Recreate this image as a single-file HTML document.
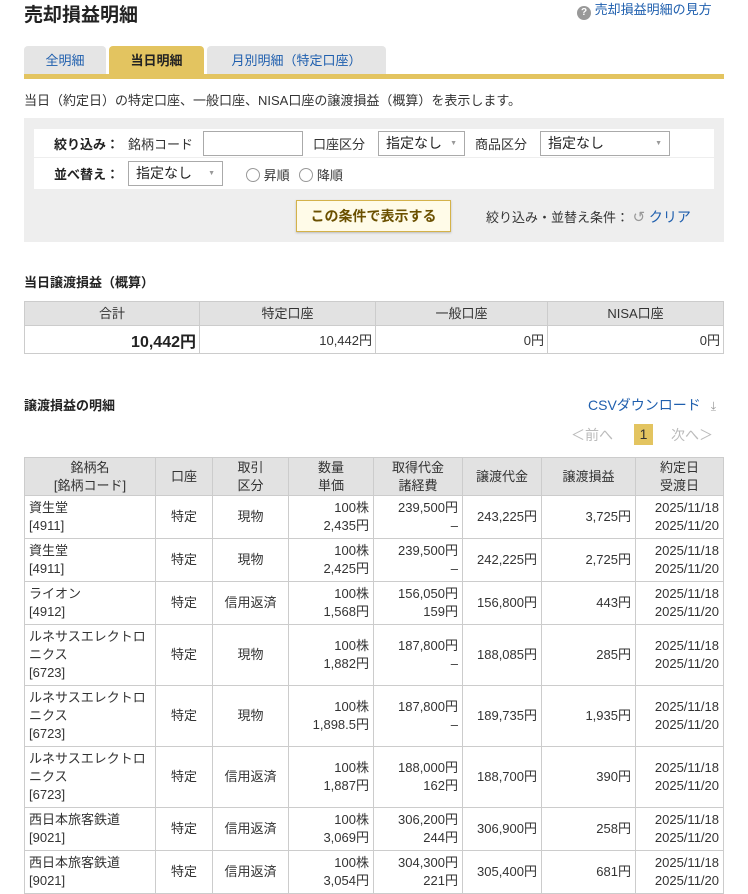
<!DOCTYPE html>
<html><head><meta charset="utf-8"><style>
*{box-sizing:border-box;margin:0;padding:0}
body{width:748px;height:894px;overflow:hidden;background:#fff;font-family:"Liberation Sans","Noto Sans CJK JP",sans-serif;font-size:13px;color:#333;position:relative}
.a{position:absolute}
.blue{color:#1f5fae}
h1{position:absolute;left:24px;top:0;font-size:19px;font-weight:bold;color:#222}
.tab{position:absolute;top:46px;height:29px;background:#e5e5e5;border-radius:4px 4px 0 0;text-align:center;line-height:29px;color:#1f5fae;font-size:13px}
.sel{background:#e3c460;color:#222;font-weight:bold}
.box{position:absolute;left:24px;top:118px;width:700px;height:124px;background:#eeeeee}
.inner{position:absolute;left:10px;top:11px;width:680px;height:60px;background:#fff}
.sel2{position:absolute;height:25px;border:1px solid #aaa;background:#fff;line-height:23px;padding-left:7px;font-size:14px;color:#222}
.sel2:after{content:"▼";position:absolute;right:7px;top:0;font-size:7px;color:#999}
table{border-collapse:collapse;position:absolute}
td,th{border:1px solid #ccc;font-weight:normal}
th{background:#e2e2e2;text-align:center;line-height:18px}
.sum td{text-align:right;padding-right:3px;height:28px}
.det td{line-height:18px;padding:0 4px;vertical-align:middle}
.r{text-align:right}.c{text-align:center}
</style></head><body>
<h1>売却損益明細</h1>
<div class="a" style="left:577px;top:-1px;font-size:13px"><span style="display:inline-block;width:14px;height:14px;border-radius:7px;background:#999;color:#fff;font-size:10px;text-align:center;line-height:14px;font-weight:bold;vertical-align:-1px">?</span> <span class="blue">売却損益明細の見方</span></div>
<div class="tab" style="left:24px;width:82px">全明細</div>
<div class="tab sel" style="left:109px;width:95px">当日明細</div>
<div class="tab" style="left:207px;width:179px">月別明細（特定口座）</div>
<div class="a" style="left:24px;top:74px;width:700px;height:5px;background:#e3c460"></div>
<div class="a" style="left:24px;top:90px">当日（約定日）の特定口座、一般口座、NISA口座の譲渡損益（概算）を表示します。</div>
<div class="box"><div class="inner">
<div class="a" style="left:0;top:0;width:680px;height:29px;border-bottom:1px solid #eee"></div>
<div class="a" style="left:20px;top:5px;font-weight:bold;color:#222">絞り込み：</div>
<div class="a" style="left:94px;top:5px">銘柄コード</div>
<div class="a" style="left:169px;top:2px;width:100px;height:25px;border:1px solid #aaa"></div>
<div class="a" style="left:279px;top:5px">口座区分</div>
<div class="sel2" style="left:344px;top:2px;width:87px">指定なし</div>
<div class="a" style="left:441px;top:5px">商品区分</div>
<div class="sel2" style="left:506px;top:2px;width:130px">指定なし</div>
<div class="a" style="left:20px;top:35px;font-weight:bold;color:#222">並べ替え：</div>
<div class="sel2" style="left:94px;top:32px;width:95px">指定なし</div>
<div class="a" style="left:212px;top:36px"><span style="display:inline-block;width:14px;height:14px;border:1px solid #999;border-radius:7px;vertical-align:-2px"></span> 昇順 <span style="display:inline-block;width:14px;height:14px;border:1px solid #999;border-radius:7px;vertical-align:-2px;margin-left:6px"></span> 降順</div>
</div>
<div class="a" style="left:272px;top:82px;width:155px;height:32px;background:#fffbe8;border:1px solid #d4b24a;box-shadow:0 1px 2px #bbb;text-align:center;line-height:30px;font-weight:bold;color:#6b5000;font-size:14px">この条件で表示する</div>
<div class="a" style="left:462px;top:89px">絞り込み・並替え条件： <span style="color:#999;font-size:15px">↺</span> <span class="blue" style="font-size:14px">クリア</span></div>
</div>
<div class="a" style="left:24px;top:272px;font-weight:bold;color:#222">当日譲渡損益（概算）</div>
<table class="sum" style="left:24px;top:301px;width:700px">
<tr><th style="width:175px;height:24px">合計</th><th style="width:176px">特定口座</th><th style="width:172px">一般口座</th><th>NISA口座</th></tr>
<tr><td style="font-size:16px;font-weight:bold;color:#222">10,442円</td><td>10,442円</td><td>0円</td><td>0円</td></tr></table>
<div class="a" style="left:24px;top:395px;font-weight:bold;color:#222">譲渡損益の明細</div>
<div class="a blue" style="left:588px;top:395px;font-size:14px">CSVダウンロード <span style="color:#999;font-size:12px;margin-left:6px">⤓</span></div>
<div class="a" style="left:571px;top:425px;color:#bbb;font-size:14px">＜前へ</div>
<div class="a" style="left:634px;top:424px;width:19px;height:21px;background:#e3c460;text-align:center;line-height:21px;font-size:14px">1</div>
<div class="a" style="left:671px;top:425px;color:#bbb;font-size:14px">次へ＞</div>
<table class="det" style="left:24px;top:457px;width:700px">
<tr style="height:38px"><th style="width:131px">銘柄名<br>[銘柄コード]</th><th style="width:57px">口座</th><th style="width:76px">取引<br>区分</th><th style="width:85px">数量<br>単価</th><th style="width:89px">取得代金<br>諸経費</th><th style="width:79px">譲渡代金</th><th style="width:94px">譲渡損益</th><th>約定日<br>受渡日</th></tr>
<tr style="height:43px"><td>資生堂<br>[4911]</td><td class="c">特定</td><td class="c">現物</td><td class="r">100株<br>2,435円</td><td class="r">239,500円<br>–</td><td class="r">243,225円</td><td class="r">3,725円</td><td class="r">2025/11/18<br>2025/11/20</td></tr>
<tr style="height:43px"><td>資生堂<br>[4911]</td><td class="c">特定</td><td class="c">現物</td><td class="r">100株<br>2,425円</td><td class="r">239,500円<br>–</td><td class="r">242,225円</td><td class="r">2,725円</td><td class="r">2025/11/18<br>2025/11/20</td></tr>
<tr style="height:43px"><td>ライオン<br>[4912]</td><td class="c">特定</td><td class="c">信用返済</td><td class="r">100株<br>1,568円</td><td class="r">156,050円<br>159円</td><td class="r">156,800円</td><td class="r">443円</td><td class="r">2025/11/18<br>2025/11/20</td></tr>
<tr style="height:61px"><td>ルネサスエレクトロニクス<br>[6723]</td><td class="c">特定</td><td class="c">現物</td><td class="r">100株<br>1,882円</td><td class="r">187,800円<br>–</td><td class="r">188,085円</td><td class="r">285円</td><td class="r">2025/11/18<br>2025/11/20</td></tr>
<tr style="height:61px"><td>ルネサスエレクトロニクス<br>[6723]</td><td class="c">特定</td><td class="c">現物</td><td class="r">100株<br>1,898.5円</td><td class="r">187,800円<br>–</td><td class="r">189,735円</td><td class="r">1,935円</td><td class="r">2025/11/18<br>2025/11/20</td></tr>
<tr style="height:61px"><td>ルネサスエレクトロニクス<br>[6723]</td><td class="c">特定</td><td class="c">信用返済</td><td class="r">100株<br>1,887円</td><td class="r">188,000円<br>162円</td><td class="r">188,700円</td><td class="r">390円</td><td class="r">2025/11/18<br>2025/11/20</td></tr>
<tr style="height:43px"><td>西日本旅客鉄道<br>[9021]</td><td class="c">特定</td><td class="c">信用返済</td><td class="r">100株<br>3,069円</td><td class="r">306,200円<br>244円</td><td class="r">306,900円</td><td class="r">258円</td><td class="r">2025/11/18<br>2025/11/20</td></tr>
<tr style="height:43px"><td>西日本旅客鉄道<br>[9021]</td><td class="c">特定</td><td class="c">信用返済</td><td class="r">100株<br>3,054円</td><td class="r">304,300円<br>221円</td><td class="r">305,400円</td><td class="r">681円</td><td class="r">2025/11/18<br>2025/11/20</td></tr>
</table>
</body></html>
